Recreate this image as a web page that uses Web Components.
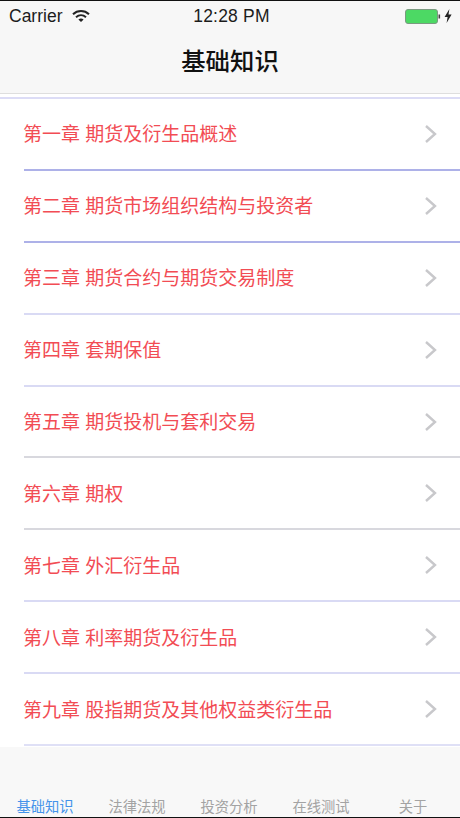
<!DOCTYPE html>
<html lang="zh"><head><meta charset="utf-8"><title>基础知识</title>
<style>
html,body{margin:0;padding:0;background:#fff}
body{font-family:"Liberation Sans","Noto Sans CJK SC",sans-serif}
</style></head><body>
<app-shell>
  <nav-header slot="top" title="基础知识"></nav-header>
  <chapter-row color="#adb1e8">第一章 期货及衍生品概述</chapter-row>
  <chapter-row color="#adb1e8">第二章 期货市场组织结构与投资者</chapter-row>
  <chapter-row color="#d9daf4">第三章 期货合约与期货交易制度</chapter-row>
  <chapter-row color="#d9daf4">第四章 套期保值</chapter-row>
  <chapter-row color="#d8d8de">第五章 期货投机与套利交易</chapter-row>
  <chapter-row color="#d8d8de">第六章 期权</chapter-row>
  <chapter-row color="#d9daf4">第七章 外汇衍生品</chapter-row>
  <chapter-row color="#d9daf4">第八章 利率期货及衍生品</chapter-row>
  <chapter-row color="#dfe0f6">第九章 股指期货及其他权益类衍生品</chapter-row>
  <tab-bar slot="bottom">
    <tab-item active>基础知识</tab-item>
    <tab-item>法律法规</tab-item>
    <tab-item>投资分析</tab-item>
    <tab-item>在线测试</tab-item>
    <tab-item>关于</tab-item>
  </tab-bar>
</app-shell>
<script>
const FONT='"Liberation Sans","Noto Sans CJK SC",sans-serif';
function def(name,css,html,init){
  customElements.define(name,class extends HTMLElement{
    connectedCallback(){
      if(this.shadowRoot)return;
      const r=this.attachShadow({mode:'open'});
      r.innerHTML='<style>'+css+'</style>'+html;
      if(init)init(this,r);
    }
  });
}
def('app-shell',`
  :host{display:flex;flex-direction:column;width:460px;height:818px;overflow:hidden;background:#fff;font-family:${FONT};border-top:1px solid #111;border-bottom:1px solid #111;box-sizing:border-box}
  .list{flex:1;min-height:0;display:flex;flex-direction:column;padding-top:3px}
  .list::before{content:"";height:2px;background:#dcdcf6;flex:none}
`,`<slot name="top"></slot><div class="list"><slot></slot></div><slot name="bottom"></slot>`);
def('nav-header',`
  :host{display:flex;flex-direction:column;height:93px;background:#f7f7f7;border-bottom:1px solid #dedede;box-sizing:border-box;flex:none;color:#111}
  .status{display:grid;grid-template-columns:1fr auto 1fr;align-items:center;height:30px;padding:0 8px 0 9px;font-size:17.5px;color:#1c1c1c}
  .l{display:flex;align-items:center;gap:10px}
  .r{display:flex;align-items:center;justify-content:flex-end;gap:3px}
  .t{letter-spacing:.2px;margin-left:2px}
  h1{margin:0;flex:1;display:flex;align-items:center;justify-content:center;font-size:24.4px;font-weight:500;padding-bottom:5px;color:#111}
`,`<div class="status"><div class="l"><span>Carrier</span>
<svg width="18" height="14" viewBox="0 0 18 14" aria-hidden="true"><path d="M1 5.2C5.6 .9 12.4 .9 17 5.2" fill="none" stroke="#222" stroke-width="2"/><path d="M4 8.2C7 5.6 11 5.6 14 8.2" fill="none" stroke="#222" stroke-width="2"/><path d="M6.4 10.4 9 13 11.6 10.4C10 9.2 8 9.2 6.4 10.4Z" fill="#222"/></svg></div>
<span class="t">12:28 PM</span>
<div class="r"><svg width="36" height="15" viewBox="0 0 36 15" aria-hidden="true"><rect x=".5" y=".5" width="32" height="14" rx="2.5" fill="#4cd964" stroke="#7a9a80"/><rect x="33.5" y="5.5" width="1.6" height="4" fill="#444"/></svg>
<svg width="8" height="14" viewBox="0 0 8 14" aria-hidden="true"><path d="M5.4 0 .6 8H3.6L2.6 14 7.6 5.6H4.5Z" fill="#222"/></svg></div></div>
<h1></h1>`,(el,r)=>{r.querySelector('h1').textContent=el.getAttribute('title')});
def('chapter-row',`
  :host{display:flex;height:71.9px;flex:none;padding-left:24px;box-sizing:border-box}
  .in{flex:1;display:flex;align-items:center;justify-content:space-between;padding:0 23px 0 0;border-bottom:var(--b,2px solid #ccc);box-sizing:border-box;color:#f24c54;font-size:19px}
  .tx{padding-bottom:2px;margin-left:-1px}
  svg{flex:none;display:block}
`,`<div class="in"><span class="tx"><slot></slot></span>
<svg width="13" height="20" viewBox="0 0 13 20" aria-hidden="true"><path d="M2 2 11 10 2 18" fill="none" stroke="#c8c8cb" stroke-width="2.4"/></svg></div>`,
(el,r)=>{r.querySelector('.in').style.setProperty('--b','2px solid '+el.getAttribute('color'))});
def('tab-bar',`
  :host{display:grid;grid-template-columns:repeat(5,1fr);height:70px;background:#f8f8f8;flex:none;align-items:end;box-sizing:border-box}
`,`<slot></slot>`);
def('tab-item',`
  :host{display:block;text-align:center;font-size:14.3px;line-height:20px;color:#a3a3a3;margin-left:-2px}
  :host([active]){color:#4493ea}
`,`<slot></slot>`);
</script>
</body></html>
